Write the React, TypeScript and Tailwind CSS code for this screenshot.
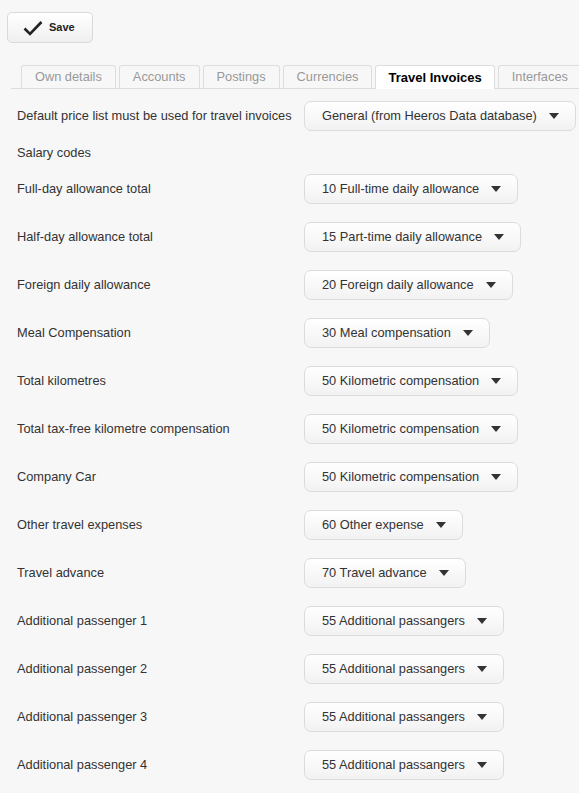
import React from "react";

const rows: [string, string][] = [
  ["Full-day allowance total", "10 Full-time daily allowance"],
  ["Half-day allowance total", "15 Part-time daily allowance"],
  ["Foreign daily allowance", "20 Foreign daily allowance"],
  ["Meal Compensation", "30 Meal compensation"],
  ["Total kilometres", "50 Kilometric compensation"],
  ["Total tax-free kilometre compensation", "50 Kilometric compensation"],
  ["Company Car", "50 Kilometric compensation"],
  ["Other travel expenses", "60 Other expense"],
  ["Travel advance", "70 Travel advance"],
  ["Additional passenger 1", "55 Additional passangers"],
  ["Additional passenger 2", "55 Additional passangers"],
  ["Additional passenger 3", "55 Additional passangers"],
  ["Additional passenger 4", "55 Additional passangers"],
];

const tabs = ["Own details", "Accounts", "Postings", "Currencies", "Travel Invoices", "Interfaces"];

function Dropdown({ value }: { value: string }) {
  return (
    <button className="h-[30px] flex items-center pl-[17px] pr-[16px] rounded-[7px] border border-[#dcdcdc] bg-gradient-to-b from-[#ffffff] to-[#f2f2f2] text-[12.8px] text-[#333] whitespace-nowrap">
      <span>{value}</span>
      <svg width="10" height="6" viewBox="0 0 10 6" className="ml-[12px]">
        <polygon points="0,0 10,0 5,6" fill="#333" />
      </svg>
    </button>
  );
}

export default function App() {
  return (
    <div
      className="min-h-screen bg-[#f7f7f7] pt-[12px] text-[#333] overflow-hidden"
      style={{ fontFamily: '"Liberation Sans", Arial, sans-serif' }}
    >
      <div className="pl-[7px]">
        <button className="w-[86px] h-[31px] flex items-center rounded-[5px] border border-[#dadada] bg-gradient-to-b from-[#ffffff] to-[#efefef]">
          <svg width="20" height="16" viewBox="0 0 20 16" className="ml-[15px]">
            <path d="M1.5 8.5 L7 14 L18.5 2" fill="none" stroke="#222" strokeWidth="2.6" strokeLinecap="butt" strokeLinejoin="miter" />
          </svg>
          <span className="ml-[6px] text-[11px] font-bold text-[#222]">Save</span>
        </button>
      </div>

      <div className="mt-[22px] ml-[11px] pl-[10px] flex gap-[3px] border-b border-[#dddddd] h-[24px] items-end">
        {tabs.map((t) => {
          const active = t === "Travel Invoices";
          return (
            <div
              key={t}
              className={
                active
                  ? "h-[24px] -mb-px px-[12px] flex items-center rounded-t-[3px] border border-b-0 border-[#dddddd] bg-white text-[13px] font-bold text-black whitespace-nowrap"
                  : "h-[23px] px-[13px] flex items-center rounded-t-[3px] border border-b-0 border-[#dddddd] bg-[#f7f7f7] text-[12.8px] text-[#999] whitespace-nowrap"
              }
            >
              {t}
            </div>
          );
        })}
      </div>

      <div className="pl-[17px] mt-[12px]">
        <div className="flex items-center h-[30px]">
          <div className="w-[287px] text-[12.8px] whitespace-nowrap">Default price list must be used for travel invoices</div>
          <Dropdown value="General (from Heeros Data database)" />
        </div>
        <div className="h-[43px] flex items-center text-[12.8px]">Salary codes</div>
        <div className="flex flex-col gap-[18px]">
          {rows.map(([label, value], i) => (
            <div key={i} className="flex items-center h-[30px]">
              <div className="w-[287px] text-[12.8px] whitespace-nowrap">{label}</div>
              <Dropdown value={value} />
            </div>
          ))}
        </div>
      </div>
    </div>
  );
}
